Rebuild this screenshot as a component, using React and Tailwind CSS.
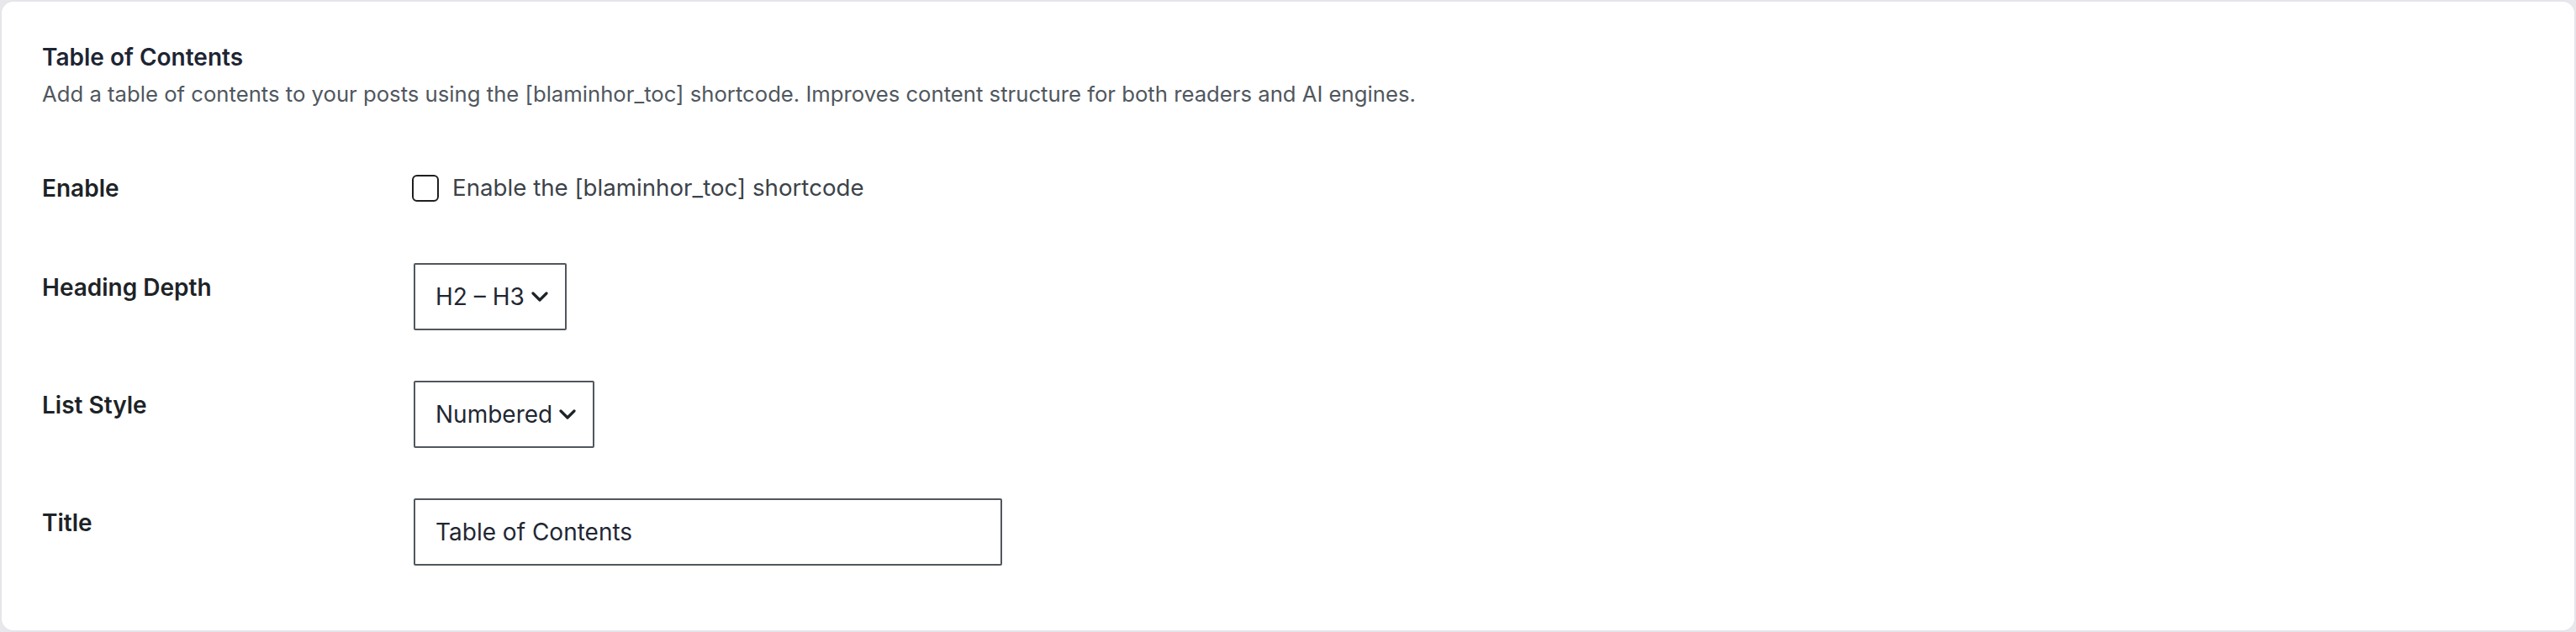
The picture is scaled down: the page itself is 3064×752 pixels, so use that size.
import React from "react";

function Chevron() {
  return (
    <svg width="20" height="12" viewBox="0 0 20 12" fill="none" className="shrink-0">
      <polyline points="2,2 10,10 18,2" stroke="#1d2327" strokeWidth="3.2" strokeLinecap="round" strokeLinejoin="round" />
    </svg>
  );
}

function Row({ label, children, first }) {
  return (
    <div className="flex">
      <div className="w-[420px] shrink-0 pt-[41px] pr-[20px] text-[28px] leading-[36px] font-semibold text-[#1d2327]">
        {label}
      </div>
      <div className={first ? "py-[30px] pl-[20px]" : "py-[30px] pl-[22px]"}>{children}</div>
    </div>
  );
}

function Select({ value }) {
  return (
    <div className="flex h-[80px] items-center gap-[8px] border-2 border-[#50575e] rounded-[2px] bg-white pl-[24px] pr-[20px] text-[28px] text-[#1f2733]">
      <span>{value}</span>
      <Chevron />
    </div>
  );
}

export default function App() {
  return (
    <div className="bg-[#e8e8ec] min-h-[752px]" style={{ fontFamily: "Inter, 'Noto Sans', sans-serif" }}>
      <div className="h-[752px] rounded-[16px] border-2 border-[#e6e6ea] bg-white px-[48px] pt-[48px]">
        <h2 className="text-[28px] leading-[36px] font-semibold text-[#1d2533]">Table of Contents</h2>
        <p className="mt-[6px] text-[25.7px] leading-[39px] text-[#50575e]">
          Add a table of contents to your posts using the [blaminhor_toc] shortcode. Improves content structure for both readers and AI engines.
        </p>
        <div className="mt-[34px]">
          <Row label="Enable" first>
            <label className="flex h-[58px] items-center gap-[16px] text-[27.7px] text-[#3c434a]">
              <span className="block h-[32px] w-[32px] rounded-[6px] border-2 border-[#1e1e1e] bg-white" />
              <span>Enable the [blaminhor_toc] shortcode</span>
            </label>
          </Row>
          <Row label="Heading Depth">
            <Select value="H2 – H3" />
          </Row>
          <Row label="List Style">
            <Select value="Numbered" />
          </Row>
          <Row label="Title">
            <div className="flex h-[80px] w-[700px] items-center border-2 border-[#50575e] rounded-[2px] bg-white px-[24px] text-[28px] text-[#1f2733]">
              Table of Contents
            </div>
          </Row>
        </div>
      </div>
    </div>
  );
}
